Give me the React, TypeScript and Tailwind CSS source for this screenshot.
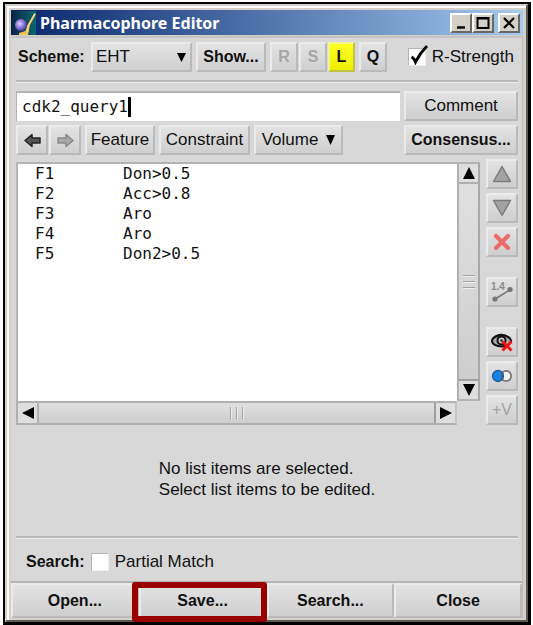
import { useState } from "react";
import type { ButtonHTMLAttributes, ReactNode } from "react";
import clsx from "clsx";

const bevel =
  "border-2 border-t-[#ebebeb] border-l-[#ebebeb] border-r-[#bababa] border-b-[#bababa] bg-linear-to-b from-[#e3e3e3] to-[#cfcfcf]";

function Btn({ className, children, ...rest }: ButtonHTMLAttributes<HTMLButtonElement>) {
  return (
    <button
      type="button"
      className={clsx("flex h-[30px] shrink-0 items-center justify-center whitespace-nowrap", bevel, className)}
      {...rest}
    >
      {children}
    </button>
  );
}

function Triangle({ dir, className = "size-3" }: { dir: "up" | "down" | "left" | "right"; className?: string }) {
  const points = {
    up: "6,0 12,12 0,12",
    down: "0,0 12,0 6,12",
    left: "0,6 12,0 12,12",
    right: "0,0 12,6 0,12",
  };
  return (
    <svg viewBox="0 0 12 12" preserveAspectRatio="none" className={className} aria-hidden="true">
      <polygon points={points[dir]} fill="#000" />
    </svg>
  );
}

function Rule() {
  return <div className="h-[3px] border-t-2 border-b border-t-[#b8b8b8] border-b-[#ececec]" />;
}

function Check({ label, checked: initial }: { label: string; checked?: boolean }) {
  const [checked, setChecked] = useState(!!initial);
  return (
    <label className="flex items-center gap-[6px] whitespace-nowrap">
      <span className="relative flex">
        <input
          type="checkbox"
          checked={checked}
          onChange={(e) => setChecked(e.target.checked)}
          className="size-[18px] appearance-none border border-t-[#b4b4b4] border-l-[#b4b4b4] border-r-[#eeeeee] border-b-[#eeeeee] bg-white"
        />
        {checked && (
          <svg viewBox="0 0 20 20" className="pointer-events-none absolute -top-[3px] left-0 size-5" aria-hidden="true">
            <path d="M3.500 12 Q6 13 7.500 17 Q12 8 19 1" fill="none" stroke="#000" strokeWidth="2.800" />
          </svg>
        )}
      </span>
      {label}
    </label>
  );
}

function Arrow({ flip, fill, stroke }: { flip?: boolean; fill: string; stroke: string }) {
  return (
    <svg viewBox="0 0 17 15" className={clsx("h-[15px] w-[17px]", flip && "-scale-x-100")} aria-hidden="true">
      <path d="M1 7.500 L8 1.500 V5 H16 V10 H8 V13.500 Z" fill={fill} stroke={stroke} strokeWidth="1.500" strokeLinejoin="round" />
    </svg>
  );
}

function Logo() {
  return (
    <svg viewBox="0 0 25 24" className="h-6 w-[25px] shrink-0" aria-hidden="true">
      <defs>
        <linearGradient id="logoBack" x1="0" y1="0" x2="1" y2="0">
          <stop offset="0" stopColor="#0a2244" />
          <stop offset="1" stopColor="#0b6672" />
        </linearGradient>
        <radialGradient id="logoBall" cx="0.4" cy="0.4" r="0.6">
          <stop offset="0" stopColor="#e0d6ff" />
          <stop offset="0.500" stopColor="#9480dc" />
          <stop offset="1" stopColor="#4a3a96" />
        </radialGradient>
      </defs>
      <rect width="25" height="24" fill="url(#logoBack)" />
      <circle cx="10" cy="14" r="6" fill="url(#logoBall)" />
      <path d="M23.500 2 L16.500 14 L14.500 20 L8 22 L8 24 H17 L19 14 L25 3 Z" fill="#f0c250" />
      <path d="M23.500 3 L17.500 14 L16 21" stroke="#fbe39a" strokeWidth="1" fill="none" />
    </svg>
  );
}

function CaptionButton({ label, children }: { label: string; children: ReactNode }) {
  return (
    <button
      type="button"
      aria-label={label}
      className="flex h-5 w-[22px] items-center justify-center border-2 border-t-white border-l-white border-r-[#6a6863] border-b-[#6a6863] bg-[#d4d0c8]"
    >
      <svg viewBox="0 0 14 14" className="size-[14px]" fill="none" stroke="#000" aria-hidden="true">
        {children}
      </svg>
    </button>
  );
}

const features = [
  ["F1", "Don>0.5"],
  ["F2", "Acc>0.8"],
  ["F3", "Aro"],
  ["F4", "Aro"],
  ["F5", "Don2>0.5"],
];

function FeatureList() {
  return (
    <div className="flex min-w-0 flex-1 pt-[3px]">
      <div className="flex min-w-0 flex-1 flex-col">
        <div className="flex-1 border-t-2 border-l-2 border-[#b4b4b4] bg-white pl-[17px]">
          <table className="font-['DejaVu_Sans_Mono',monospace] text-[16px] leading-5">
            <tbody>
              {features.map(([id, expr]) => (
                <tr key={id}>
                  <td className="w-[88px] p-0">{id}</td>
                  <td className="p-0">{expr}</td>
                </tr>
              ))}
            </tbody>
          </table>
        </div>
        <div className="flex h-6 border-2 border-t-[#b0b0b0] border-l-[#b0b0b0] border-r-[#c4c4c4] border-b-[#b0b0b0]">
          <button type="button" aria-label="Scroll left" className="flex w-[21px] items-center justify-center border-r-2 border-[#b0b0b0] bg-[#dedede]">
            <Triangle dir="left" />
          </button>
          <div className="flex flex-1 items-center justify-center gap-1 bg-linear-to-b from-[#e0e0e0] to-[#cecece]">
            <i className="h-3 w-[2px] border-l border-[#a4a4a4] bg-[#eeeeee]" />
            <i className="h-3 w-[2px] border-l border-[#a4a4a4] bg-[#eeeeee]" />
            <i className="h-3 w-[2px] border-l border-[#a4a4a4] bg-[#eeeeee]" />
          </div>
          <button type="button" aria-label="Scroll right" className="flex w-[21px] items-center justify-center border-l-2 border-[#a0a0a0] bg-[#dedede]">
            <Triangle dir="right" />
          </button>
        </div>
      </div>
      <div className="mb-6 flex w-[23px] flex-col border-2 border-t-[#b4b4b4] border-l-[#b0b0b0] border-r-[#a8a8a8] border-b-[#b4b4b4]">
        <button type="button" aria-label="Scroll up" className="flex h-5 items-center justify-center border-b-2 border-[#b0b0b0] bg-[#dedede]">
          <Triangle dir="up" />
        </button>
        <div className="flex flex-1 flex-col items-center justify-center gap-1 bg-linear-to-b from-[#e0e0e0] to-[#cecece]">
          <i className="h-[2px] w-3 border-t border-[#a4a4a4] bg-[#eeeeee]" />
          <i className="h-[2px] w-3 border-t border-[#a4a4a4] bg-[#eeeeee]" />
          <i className="h-[2px] w-3 border-t border-[#a4a4a4] bg-[#eeeeee]" />
        </div>
        <button type="button" aria-label="Scroll down" className="flex h-5 items-center justify-center border-t-2 border-[#a0a0a0] bg-[#dedede]">
          <Triangle dir="down" />
        </button>
      </div>
    </div>
  );
}

function SideTools() {
  return (
    <div className="flex w-8 flex-col gap-1">
      <Btn aria-label="Move up">
        <svg viewBox="0 0 20 18" className="h-[18px] w-5">
          <path d="M10 1.500 L18.500 16.500 H1.500 Z" fill="#a3a3a3" stroke="#7d7d7d" strokeWidth="1.500" strokeLinejoin="round" />
        </svg>
      </Btn>
      <Btn aria-label="Move down">
        <svg viewBox="0 0 20 18" className="h-[18px] w-5">
          <path d="M10 16.500 L18.500 1.500 H1.500 Z" fill="#a3a3a3" stroke="#7d7d7d" strokeWidth="1.500" strokeLinejoin="round" />
        </svg>
      </Btn>
      <Btn aria-label="Delete">
        <svg viewBox="0 0 18 18" className="size-[18px]">
          <path d="M3 3 L15 15 M15 3 L3 15" stroke="#ec6b6b" strokeWidth="4.200" strokeLinecap="round" />
        </svg>
      </Btn>
      <Btn aria-label="Measure distance" className="mt-4">
        <svg viewBox="0 0 24 22" className="h-[22px] w-6">
          <text x="1" y="9" fontSize="10" fontWeight="bold" fontFamily="Liberation Sans, sans-serif" fill="#8a8a8a">
            1.4
          </text>
          <path d="M5 18 L20 9" stroke="#777" strokeWidth="1.500" />
          <circle cx="20" cy="8.500" r="2.600" fill="#777" />
          <circle cx="5" cy="18" r="2.600" fill="#777" />
        </svg>
      </Btn>
      <Btn aria-label="Hide" className="mt-4">
        <svg viewBox="0 0 22 20" className="h-5 w-[22px]" fill="none">
          <ellipse cx="10.500" cy="9" rx="9.500" ry="5.500" fill="#aaa" stroke="#111" strokeWidth="2" />
          <path d="M2 6 Q10 -1 19 6" stroke="#111" strokeWidth="1.500" />
          <circle cx="10.500" cy="8.500" r="4" fill="#ccc" stroke="#111" strokeWidth="2" />
          <circle cx="10.500" cy="8.500" r="1.500" fill="#444" />
          <path d="M11.500 9.500 L20.500 18.500 M20.500 9.500 L11.500 18.500" stroke="#f01414" strokeWidth="3" />
        </svg>
      </Btn>
      <Btn aria-label="Combine">
        <svg viewBox="0 0 22 14" className="h-[14px] w-[22px]">
          <circle cx="15" cy="7" r="5.200" fill="#f6f6f6" stroke="#777" strokeWidth="1.800" />
          <circle cx="7" cy="7" r="5.400" fill="#1584e4" stroke="#1c5c98" strokeWidth="1.500" />
          <path d="M11.500 3 V11" stroke="#556" strokeWidth="1.500" />
        </svg>
      </Btn>
      <Btn className="text-[16px] text-[#a2a2a2]">+V</Btn>
    </div>
  );
}

export default function App() {
  const [name, setName] = useState("cdk2_query1");
  return (
    <div className="flex min-h-screen bg-white pt-[2px] pr-[2px] pl-[3px] font-['Liberation_Sans',Arial,sans-serif] text-[17px] leading-5 text-[#111]">
      <div className="flex min-w-0 flex-1 border-t-2 border-r-3 border-b-3 border-l-2 border-black">
        <div className="flex min-w-0 flex-1 flex-col border-2 border-t-[#d4d0c8] border-l-[#d4d0c8] border-r-[#5c5a57] border-b-[#5c5a57] bg-[#d4d0c8]">
          <div className="flex flex-1 flex-col border-t-2 border-l-2 border-white pt-[2px] pr-[3px] pb-[2px] pl-[2px]">
            <header className="flex h-[25px] items-center gap-1 bg-linear-to-r from-[#0a246a] to-[#a6caf0] pr-[3px]">
              <Logo />
              <h1 className="flex-1 font-['Noto_Sans',sans-serif] text-[16px] font-bold text-white">Pharmacophore Editor</h1>
              <div className="flex">
                <CaptionButton label="Minimize">
                  <path d="M3 11.500 H11" strokeWidth="2.500" />
                </CaptionButton>
                <CaptionButton label="Maximize">
                  <path d="M1.500 2 H12.500 V12 H1.500 Z M1 2.500 H13" strokeWidth="2" />
                </CaptionButton>
              </div>
              <CaptionButton label="Close window">
                <path d="M2 2 L12 12 M12 2 L2 12" strokeWidth="2.200" />
              </CaptionButton>
            </header>

            <main className="mt-[1px] flex flex-1 flex-col border-t-2 border-r border-t-[#c4c4c4] border-r-[#bcbcbc] bg-[#d8d8d8]">
              <div className="flex flex-1 flex-col pt-1 pr-1 pl-[5px]">
                <div className="flex items-center">
                  <label htmlFor="scheme" className="w-[75px] pl-[2px] text-[16px] font-bold">
                    Scheme:
                  </label>
                  <div className="relative">
                    <select id="scheme" className={clsx("h-[30px] w-[101px] appearance-none pl-[3px]", bevel)}>
                      <option>EHT</option>
                    </select>
                    <span className="pointer-events-none absolute top-[11px] right-[6px]">
                      <Triangle dir="down" className="h-[9px] w-[9px]" />
                    </span>
                  </div>
                  <Btn className="ml-1 w-[70px] text-[16px] font-bold">Show...</Btn>
                  <div className="ml-1 flex gap-[1px] text-[16px] font-bold">
                    <Btn className="w-7 text-[#a6a6a6]">R</Btn>
                    <Btn className="w-7 text-[#a6a6a6]">S</Btn>
                    <button type="button" className="w-[27px] border-2 border-t-[#f4f48a] border-r-[#c2c24a] border-b-[#c2c24a] border-l-[#f4f48a] bg-linear-to-b from-[#ffff20] to-[#eded00]">
                      L
                    </button>
                  </div>
                  <Btn className="ml-1 w-7 text-[16px] font-bold">Q</Btn>
                  <div className="mr-1 ml-auto">
                    <Check label="R-Strength" checked />
                  </div>
                </div>

                <div className="mt-2 mb-2">
                  <Rule />
                </div>

                <div className="flex gap-1">
                  <label className="flex h-[30px] min-w-0 flex-1 items-center border-t-2 border-l border-[#b4b4b4] bg-white pl-[5px]">
                    <input
                      type="text"
                      aria-label="Query name"
                      value={name}
                      onChange={(e) => setName(e.target.value)}
                      className="field-sizing-content font-['DejaVu_Sans_Mono',monospace] text-[16px] caret-transparent outline-none"
                    />
                    <span className="h-5 w-[3px] bg-black" />
                  </label>
                  <Btn className="w-[114px]">Comment</Btn>
                </div>

                <div className="mt-1 flex">
                  <Btn aria-label="Back" className="w-8">
                    <Arrow fill="#555" stroke="#222" />
                  </Btn>
                  <Btn aria-label="Forward" className="ml-[1px] w-8">
                    <Arrow flip fill="#a6a6a6" stroke="#8a8a8a" />
                  </Btn>
                  <Btn className="ml-1 w-[70px]">Feature</Btn>
                  <Btn className="ml-1 w-[91px]">Constraint</Btn>
                  <Btn className="ml-1 w-[89px] gap-2">
                    Volume
                    <Triangle dir="down" className="h-[10px] w-[9px]" />
                  </Btn>
                  <Btn className="ml-auto w-[114px] text-[16px] font-bold">Consensus...</Btn>
                </div>

                <div className="mt-1 flex gap-[6px]">
                  <FeatureList />
                  <SideTools />
                </div>

                <div className="flex flex-1 flex-col items-center justify-center pb-1">
                  <p className="leading-[21px]">
                    No list items are selected.
                    <br />
                    Select list items to be edited.
                  </p>
                </div>

                <Rule />
                <div className="flex items-center gap-[6px] pt-[13px] pb-[9px] pl-[10px]">
                  <span className="text-[16px] font-bold">Search:</span>
                  <Check label="Partial Match" />
                </div>
              </div>

              <footer className="grid grid-cols-4 border-t-2 border-[#b4b4b4] text-[16px] font-bold">
                <Btn className="h-[35px]">Open...</Btn>
                <div className="relative">
                  <Btn className="h-[35px] w-full">Save...</Btn>
                  <span className="pointer-events-none absolute -top-[1px] right-0 -bottom-[4px] -left-[7px] rounded-[3px] border-6 border-[#990000]" />
                </div>
                <Btn className="h-[35px]">Search...</Btn>
                <Btn className="h-[35px]">Close</Btn>
              </footer>
            </main>
          </div>
        </div>
      </div>
    </div>
  );
}
